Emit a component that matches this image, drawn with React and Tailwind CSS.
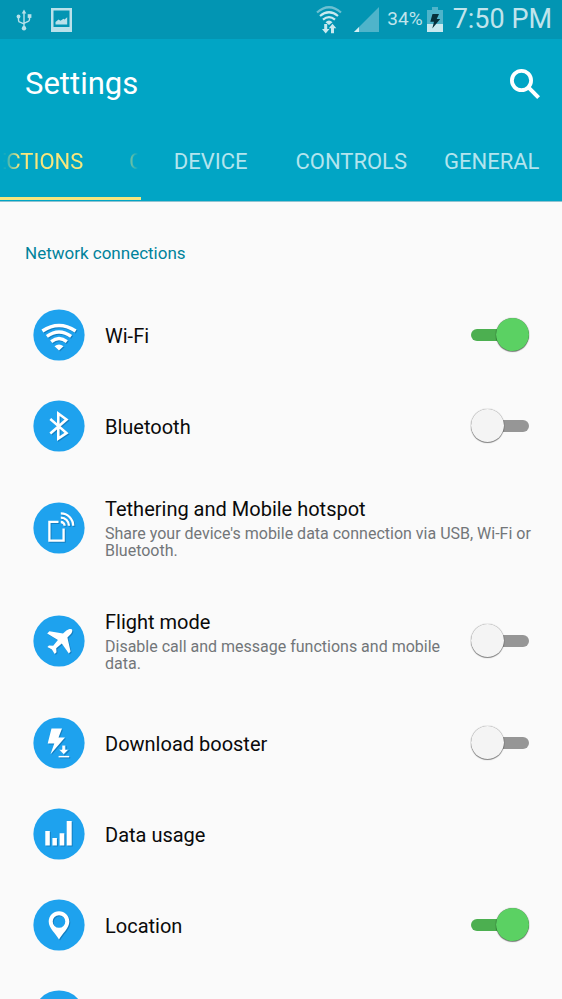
import React, { useState } from 'react';

const UsbIcon = () => (
  <svg viewBox="0 0 16 22" className="h-[22px] w-4" fill="none" stroke="#b9e1ea" strokeWidth="1.4">
    <path d="M8 4v14M2.5 8v3.2Q2.5 13 4.500 13.400L8 14.800M13.500 7v3.500Q13.500 12.200 11.500 12.700L8 14.300" />
    <path d="M8 .5L10.300 4.500H5.700z" fill="#b9e1ea" stroke="none" />
    <circle cx="2.500" cy="7.500" r="1.900" fill="#b9e1ea" stroke="none" />
    <path d="M11.700 5.200h3.700v3.700h-3.700z" fill="#b9e1ea" stroke="none" />
    <circle cx="8" cy="19.300" r="2.200" fill="#b9e1ea" stroke="none" />
  </svg>
);

const PictureIcon = () => (
  <svg viewBox="0 0 21 24" className="h-6 w-[21px]">
    <path d="M0 0h21v24H0zM2.500 2.500v16.500h16V2.500z" fill="#b9e1ea" fillRule="evenodd" />
    <path d="M4.500 16.500V14l3-2.500 2 1.200 3-2 1 .8 2.700-2.200V16.500z" fill="#b9e1ea" />
  </svg>
);

const StatusWifiIcon = () => (
  <svg viewBox="0 0 26 28" className="h-7 w-[26px]" fill="none" stroke="#c9e9ef" strokeWidth="2.200">
    <path d="M1 6.500Q13-4 25 6.500" stroke="#6dc0d2" />
    <path d="M4 10Q13 2.500 22 10M7 13.600Q13 8.600 19 13.600" />
    <path d="M9.500 16.200Q13 13 16.500 16.200L13 19z" fill="#c9e9ef" stroke="none" />
    <path d="M8.200 18h3v5h2.300L9.700 27.500 6 23h2.200zM15 27.300h3v-5h2.300L16.500 17.800 12.800 22.300H15z" fill="#c9e9ef" stroke="none" />
  </svg>
);

const SignalIcon = () => (
  <svg viewBox="0 0 25 25" className="h-[25px] w-[25px]">
    <path d="M25 0v25H0z" fill="#4fb4ca" />
    <path d="M5 20v5H0z" fill="#d6eff4" />
  </svg>
);

const BatteryIcon = () => (
  <svg viewBox="0 0 16 25" className="h-[25px] w-4">
    <path d="M5 0h6v3h5v14H0V3h5z" fill="#4fb4ca" />
    <path d="M0 17h16v8H0z" fill="#c9e9ef" />
    <path d="M5.500 7h6.500l-2.300 5h3.500L5.300 21.500 7 14.800H3.300z" fill="#06303b" />
  </svg>
);

const SearchIcon = () => (
  <svg viewBox="0 0 30 30" className="h-[30px] w-[30px]" fill="none" stroke="#fff">
    <circle cx="11.500" cy="11.500" r="9.600" strokeWidth="3.800" />
    <path d="M18.200 18.200L28.600 28.600" strokeWidth="4" />
  </svg>
);

const glyphs = {
  wifi: (
    <>
      <g fill="none" stroke="#fff" strokeWidth="3.400">
        <path d="M9.400 22Q26 10.800 42.600 22" />
        <path d="M13.900 27.400Q26 18.600 38.100 27.400" />
        <path d="M18.200 32.600Q26 26.400 33.800 32.600" />
      </g>
      <path d="M21.500 37.200Q26 33.800 30.500 37.200L26 41.500z" fill="#fff" />
    </>
  ),
  bluetooth: (
    <path
      d="M17.300 19L33.500 33 25.300 38.500V13.500L33.500 19.500 17.300 33.500"
      fill="none"
      stroke="#fff"
      strokeWidth="2.600"
    />
  ),
  tethering: (
    <g fill="none" stroke="#fff">
      <path d="M25.500 19.800H16.400V38.600H30.600V26.500" strokeWidth="2.300" />
      <path d="M27.800 11.400A12.400 12.400 0 0 1 40.200 23.800" strokeWidth="2.300" />
      <path d="M27.800 15.600A8.200 8.200 0 0 1 36 23.800" strokeWidth="2.300" />
      <path d="M27.800 20A3.800 3.800 0 0 1 31.600 23.800" strokeWidth="2.300" />
    </g>
  ),
  flight: (
    <path
      d="M39.200 15c.5 1.600-.9 3.500-2.100 4.800L34.400 22.600 37.600 36.500 35.800 38.400 28.800 28.600 23.200 33.300 23.500 37.300 21.700 39 18.900 34.600 14.400 32 16 30.400 20.200 30.800 24.900 24.900 14.200 18.600 16.400 16.200 30 18.500 33.400 15.600C35.400 13.900 38.700 13.400 39.200 15z"
      fill="#fff"
    />
  ),
  booster: (
    <g fill="#fff">
      <path d="M18.500 11.500H29L25.500 20.400H32L17.500 37.300 21.300 26.400H14.700z" />
      <path d="M29 28.200h3.400v4.200h3.300L30.700 37.500 25.800 32.400H29z" stroke="#1ea2ee" strokeWidth=".6" />
      <path d="M25.600 38.900h10.600v1.500H25.600z" />
    </g>
  ),
  data: (
    <path d="M12.300 23h4.500v14.500h-4.500zM19.400 30h4.500v7.500h-4.500zM26.600 25.300h4.700v12.200h-4.700zM33.700 13h5v24.500h-5z" fill="#fff" />
  ),
  location: (
    <path
      d="M26 12.300c-5.800 0-10.300 4.500-10.300 10.200C15.700 29.500 22.500 34 26 40.500 29.500 34 36.300 29.500 36.300 22.500 36.300 16.800 31.800 12.300 26 12.300zM26 16.200a6.300 6.300 0 1 1 0 12.600 6.300 6.300 0 0 1 0-12.600z"
      fill="#fff"
      fillRule="evenodd"
    />
  )
};

const items = [
  { id: 'wifi', title: 'Wi-Fi', toggle: true },
  { id: 'bluetooth', title: 'Bluetooth', toggle: true },
  {
    id: 'tethering',
    title: 'Tethering and Mobile hotspot',
    description: "Share your device's mobile data connection via USB, Wi-Fi or Bluetooth."
  },
  {
    id: 'flight',
    title: 'Flight mode',
    description: 'Disable call and message functions and mobile data.',
    toggle: true
  },
  { id: 'booster', title: 'Download booster', toggle: true },
  { id: 'data', title: 'Data usage' },
  { id: 'location', title: 'Location', toggle: true },
  { id: 'more' }
];

const SettingRow = ({ item, checked, onToggle }) => (
  <li
    className={`flex items-center pr-6 pl-[33px] ${item.description ? 'h-[113px]' : 'h-[91px]'}`}
  >
    <svg viewBox="0 0 52 52" className="mr-5 h-[52px] w-[52px] shrink-0" aria-hidden="true">
      <circle cx="26" cy="26" r="25.600" fill="#1ea2ee" />
      <g className="drop-shadow-[1px_1px_0px_rgba(0,60,110,0.35)]">{glyphs[item.id]}</g>
    </svg>
    <div className="min-w-0 flex-1 pt-0.5">
      {item.toggle ? (
        <label htmlFor={item.id} className="block text-xl leading-6 text-[#0a0a0a]">
          {item.title}
        </label>
      ) : (
        <p className="text-xl leading-6 text-[#0a0a0a]">{item.title}</p>
      )}
      {item.description && (
        <p className="pt-1 pb-0.5 text-base leading-[17px] text-[#727679]">{item.description}</p>
      )}
    </div>
    {item.toggle && (
      <input
        id={item.id}
        type="checkbox"
        checked={checked}
        onChange={() => onToggle(item.id)}
        className="relative mr-[9px] ml-6 h-[34px] w-[58px] shrink-0 cursor-pointer appearance-none before:absolute before:top-[11px] before:left-0 before:h-3 before:w-full before:rounded-full before:bg-[#969696] after:absolute after:top-0 after:left-0 after:h-[33px] after:w-[33px] after:rounded-full after:bg-[#f4f4f4] after:shadow-[0_0_1px_0_rgba(0,0,0,0.6),0_1px_1px_0_rgba(0,0,0,0.45)] checked:before:bg-[#4caf50] checked:after:left-[25px] checked:after:bg-[#5bd163]"
      />
    )}
  </li>
);

const tabs = ['CONNECTIONS', 'DEVICE', 'CONTROLS', 'GENERAL'];

const App = () => {
  const [activeTab, setActiveTab] = useState('CONNECTIONS');
  const [enabled, setEnabled] = useState({ wifi: true, location: true });

  const handleToggle = (id) => {
    setEnabled(prev => ({ ...prev, [id]: !prev[id] }));
  };

  return (
    <div className="flex h-screen flex-col overflow-hidden bg-[#fafafa] font-['Roboto',sans-serif]">
      <div className="flex h-[39px] shrink-0 items-center bg-[#0295b3] pr-[10px] pl-4 text-[#c0e4ec]">
        <UsbIcon />
        <div className="ml-[19px]">
          <PictureIcon />
        </div>
        <div className="ml-auto flex items-center">
          <StatusWifiIcon />
          <div className="ml-3">
            <SignalIcon />
          </div>
          <span className="ml-2 text-[19px]">34%</span>
          <div className="mr-[6px] ml-1">
            <BatteryIcon />
          </div>
          <span className="ml-1 text-[27px]">7:50 PM</span>
        </div>
      </div>

      <header className="shrink-0 border-b border-[#8fc3d0] bg-[#01a5c5]">
        <div className="flex h-[90px] items-center justify-between pr-[22px] pl-[25px]">
          <h1 className="text-[31px] text-white">Settings</h1>
          <button type="button" aria-label="Search">
            <SearchIcon />
          </button>
        </div>
        <nav className="grid h-[72px] grid-cols-4 pb-px">
          {tabs.map((tab) => {
            const active = tab === activeTab;
            return (
              <button
                key={tab}
                type="button"
                onClick={() => setActiveTab(tab)}
                className={`min-w-0 border-b-[3px] pb-1 text-[22px] ${
                  active ? 'border-[#f5e67f] text-[#f9e67c]' : 'border-transparent text-[#b3e4ee]'
                }`}
              >
                {tab === 'CONNECTIONS' ? (
                  <span className="mx-[3px] flex overflow-hidden [mask-image:linear-gradient(to_right,transparent,black_16px,black_calc(100%-16px),transparent)]">
                    <span className="-ml-[70px] flex gap-[46px]">
                      <span>{tab}</span>
                      <span aria-hidden="true">{tab[0]}</span>
                    </span>
                  </span>
                ) : (
                  tab
                )}
              </button>
            );
          })}
        </nav>
      </header>

      <main>
        <h2 className="pt-[39px] pl-[25px] text-[17px] leading-6 text-[#00829b]">Network connections</h2>
        <ul className="pt-6">
          {items.map((item) => (
            <SettingRow
              key={item.id}
              item={item}
              checked={!!enabled[item.id]}
              onToggle={handleToggle}
            />
          ))}
        </ul>
      </main>
    </div>
  );
};

export default App;
